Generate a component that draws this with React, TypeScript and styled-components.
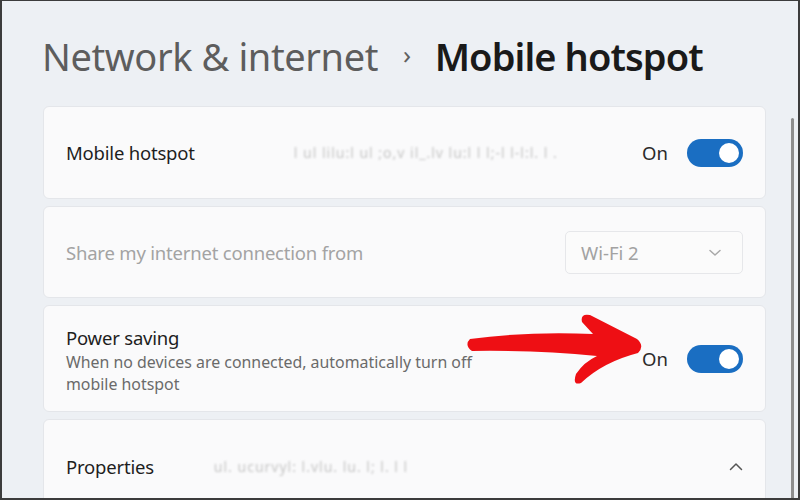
import React from "react";
import styled, { createGlobalStyle } from "styled-components";

const Global = createGlobalStyle`
  html, body { margin: 0; padding: 0; background: #eceff3; }
  body { font-family: "Noto Sans", "Open Sans", sans-serif; }
  * { box-sizing: border-box; }
`;

const Frame = styled.div`
  position: relative;
  width: 800px;
  height: 500px;
  overflow: hidden;
  background: #edf0f4;
  border-top: 1px solid #3c3c3c;
  border-left: 2px solid #3c3c3c;
  border-right: 2px solid #3c3c3c;
  border-bottom: 2px solid #3c3c3c;
  display: flex;
`;

const Content = styled.div`
  flex: 1;
  padding: 29px 0 0 40px;
  display: flex;
  flex-direction: column;
`;

const Breadcrumb = styled.h1`
  margin: 0 0 24px 0;
  height: 58px;
  display: flex;
  align-items: center;
  font-size: 38px;
  font-weight: 400;
  letter-spacing: -0.4px;
  color: #5d5d5d;
`;

const Sep = styled.span`
  font-size: 26px;
  color: #606060;
  margin: 0 24px 0 25px;
  transform: translateY(-2px);
`;

const Current = styled.span`
  color: #1a1a1a;
  font-weight: 600;
  letter-spacing: -0.9px;
`;

const Cards = styled.div`
  display: flex;
  flex-direction: column;
  gap: 7px;
  padding-left: 1px;
`;

const Card = styled.div<{ $h: number }>`
  position: relative;
  flex-shrink: 0;
  height: ${(p) => p.$h}px;
  background: #fafafb;
  border: 1px solid #e4e6ea;
  border-radius: 6px;
  display: flex;
  align-items: center;
  padding: 0 22px 0 22px;
`;

const Label = styled.div<{ $muted?: boolean }>`
  font-size: 18.5px;
  color: ${(p) => (p.$muted ? "#a3a3a3" : "#1e1e1e")};
  letter-spacing: -0.2px;
`;

const TextCol = styled.div`
  display: flex;
  flex-direction: column;
  gap: 1px;
  margin-top: 2px;
`;

const Desc = styled.div`
  font-size: 15.9px;
  line-height: 22px;
  color: #6a6a6a;
  width: 440px;
`;

const Hidden = styled.div<{ $w: number; $ml: number }>`
  width: ${(p) => p.$w}px;
  margin-left: ${(p) => p.$ml}px;
  font-size: 14px;
  color: #c6c6c6;
  filter: blur(1px);
  white-space: nowrap;
  overflow: hidden;
  letter-spacing: 1px;
`;

const Spacer = styled.div`
  flex: 1;
`;

const State = styled.span`
  font-size: 18.5px;
  color: #2a2a2a;
  margin-right: 19px;
`;

const Toggle = styled.div`
  width: 56px;
  height: 28px;
  border-radius: 14px;
  background: #1a6ec2;
  display: flex;
  align-items: center;
  justify-content: flex-end;
  padding-right: 4px;
`;

const Knob = styled.div`
  width: 20px;
  height: 20px;
  border-radius: 50%;
  background: #ffffff;
`;

const Select = styled.div`
  width: 178px;
  height: 43px;
  border: 1px solid #e6e7ea;
  border-radius: 5px;
  background: #fbfbfb;
  display: flex;
  align-items: center;
  justify-content: space-between;
  padding: 0 20px 0 15px;
  font-size: 18.5px;
  color: #a2a2a2;
`;

const ArrowOverlay = styled.svg`
  position: absolute;
  left: 416px;
  top: 0px;
`;

const ScrollTrack = styled.div`
  width: 32px;
  display: flex;
  justify-content: flex-end;
  padding-right: 4px;
`;

const Thumb = styled.div`
  margin-top: 117px;
  width: 3px;
  height: 400px;
  border-radius: 2px;
  background: #8e8e8e;
`;

const Chevron = ({ up }: { up?: boolean }) => (
  <svg width="14" height="9" viewBox="0 0 14 9" fill="none">
    <path
      d={up ? "M1.5 7.5 L7 2 L12.5 7.5" : "M2 2.5 L7 7 L12 2.5"}
      stroke={up ? "#555" : "#a8a8a8"}
      strokeWidth="1.5"
      strokeLinecap="round"
      strokeLinejoin="round"
    />
  </svg>
);

export default function App() {
  return (
    <>
      <Global />
      <Frame>
        <Content>
          <Breadcrumb>
            Network &amp; internet<Sep>›</Sep>
            <Current>Mobile hotspot</Current>
          </Breadcrumb>
          <Cards>
            <Card $h={93}>
              <Label>Mobile hotspot</Label>
              <Hidden $w={295} $ml={99}>
                l ul lilu:l ul ;o,v il_.lv lu:l  l l;-l l-l:l.  l .
              </Hidden>
              <Spacer />
              <State>On</State>
              <Toggle>
                <Knob />
              </Toggle>
            </Card>
            <Card $h={92}>
              <Label $muted>Share my internet connection from</Label>
              <Spacer />
              <Select>
                <span>Wi-Fi 2</span>
                <Chevron />
              </Select>
            </Card>
            <Card $h={107}>
              <TextCol>
                <Label>Power saving</Label>
                <Desc>
                  When no devices are connected, automatically turn off mobile
                  hotspot
                </Desc>
              </TextCol>
              <Spacer />
              <State>On</State>
              <Toggle>
                <Knob />
              </Toggle>
              <ArrowOverlay width="190" height="85" viewBox="460 305 190 85">
                <path
                  d="M470 338 Q530 330 593 333 L582 321 Q580 312 590 314 L637 338 Q645 345 638 352 Q603 361 581 382 Q572 385 576 373 Q584 361 597 355 Q535 349 472 350 Q464 344 470 338 Z"
                  fill="#ee0f14"
                />
              </ArrowOverlay>
            </Card>
            <Card $h={94}>
              <Label>Properties</Label>
              <Hidden $w={285} $ml={60}>
                ul. ucurvyl: l.vlu. lu. l; l. l l
              </Hidden>
              <Spacer />
              <Chevron up />
            </Card>
          </Cards>
        </Content>
        <ScrollTrack>
          <Thumb />
        </ScrollTrack>
      </Frame>
    </>
  );
}
